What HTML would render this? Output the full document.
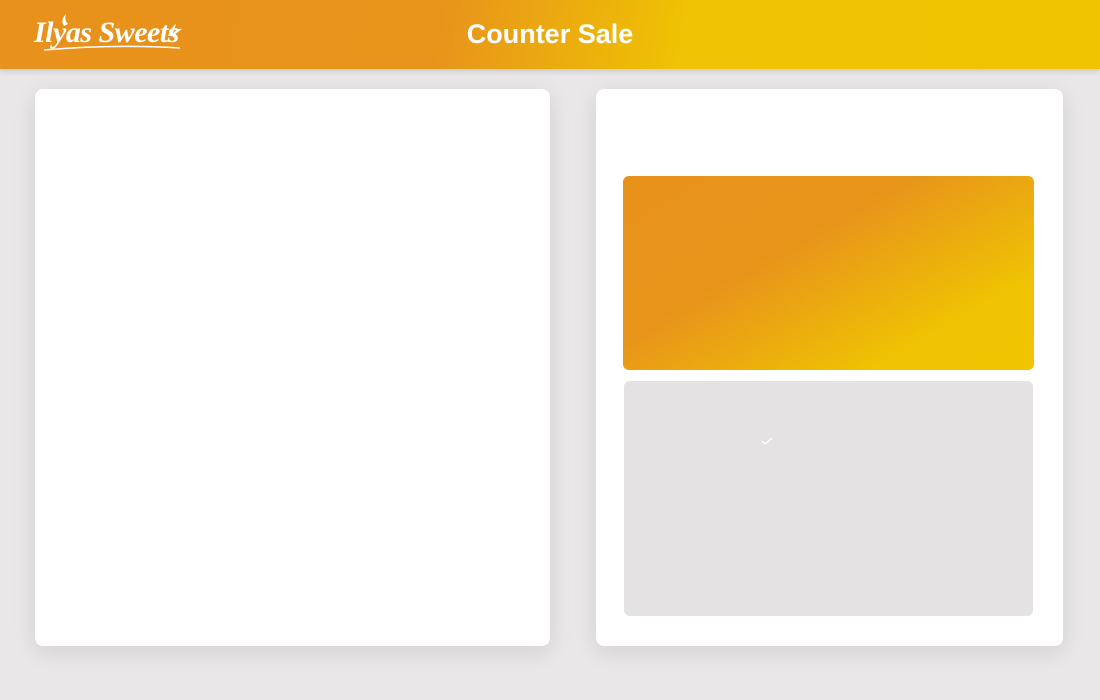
<!DOCTYPE html>
<html><head><meta charset="utf-8"><style>
html,body{margin:0;padding:0;width:1100px;height:700px;overflow:hidden;background:#e9e7e8;font-family:"Liberation Sans",sans-serif}
.hdr{position:absolute;left:0;top:0;width:1100px;height:69px;background:linear-gradient(100deg,#e8911c 0%,#e8941b 40%,#efc203 62%,#f0c400 100%);box-shadow:0 2px 6px rgba(0,0,0,.15)}
.title{position:absolute;left:0;right:0;top:19px;text-align:center;color:#fff;font-weight:bold;font-size:27px}
.logo{position:absolute;left:34px;top:16px;color:#fff;font-family:"Liberation Serif",serif;font-style:italic;font-weight:bold;font-size:30px;letter-spacing:-0.5px}
.card{position:absolute;background:#fff;border-radius:8px;box-shadow:0 6px 24px rgba(0,0,0,.10)}
</style></head><body>
<div class="hdr">
 <div class="logo">Ilyas Sweets</div>
 <svg style="position:absolute;left:34px;top:10px" width="150" height="45">
  <path d="M10 40 Q80 34 146 38" stroke="#fff" stroke-width="1.5" fill="none"/>
  <path d="M134 26 q4 -10 8 -12 q-2 6 -4 12 z M140 22 q5 -4 8 -3 q-4 3 -8 6z" fill="#fff"/>
  <path d="M30 16 q-4 -6 2 -12 q-2 6 2 10z" fill="#fff"/>
 </svg>
 <div class="title">Counter Sale</div>
</div>
<div class="card" style="left:35px;top:89px;width:515px;height:557px"></div>
<div class="card" style="left:596px;top:89px;width:467px;height:557px">
 <div style="position:absolute;left:27px;top:87px;width:411px;height:194px;border-radius:6px;background:linear-gradient(150deg,#e8921c 0%,#e8941b 38%,#efc203 78%,#f0c400 100%)"></div>
 <div style="position:absolute;left:28px;top:292px;width:409px;height:235px;border-radius:6px;background:#e4e2e3">
  <svg style="position:absolute;left:137px;top:55px" width="12" height="10"><path d="M1 5 L4 8 L11 2" stroke="#fff" stroke-width="1.3" fill="none"/></svg>
 </div>
</div>
</body></html>
